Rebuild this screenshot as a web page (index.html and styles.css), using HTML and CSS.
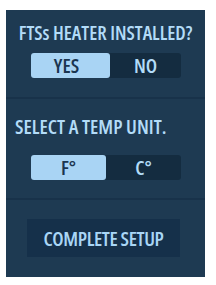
FILE: index.html
```html
<!DOCTYPE html>
<html lang="en">
<head>
    <meta charset="UTF-8">
    <meta name="viewport" content="width=device-width, initial-scale=1.0">
    <title>Setup</title>
    <link rel="stylesheet" href="styles.css">
</head>
<body>
    <div class="panel">
        <div class="section heater">
            <h2 class="title center">FTSs HEATER INSTALLED?</h2>
            <div class="toggle">
                <span class="opt active">YES</span>
                <span class="opt">NO</span>
            </div>
        </div>
        <div class="section unit">
            <h2 class="title">SELECT A TEMP UNIT.</h2>
            <div class="toggle">
                <span class="opt active">F°</span>
                <span class="opt">C°</span>
            </div>
        </div>
        <div class="section finish">
            <button class="complete">COMPLETE SETUP</button>
        </div>
    </div>
</body>
</html>
```

FILE: styles.css
```css
body {
    margin: 0;
    padding: 0;
    background-color: #fff;
    font-family: "Open Sans", "Roboto Condensed", sans-serif;
    font-stretch: 75%;
}
.panel {
    width: 199px;
    height: 267px;
    margin: 10px 0 0 6px;
    background-color: #1e3a52;
}
.section {
    border-bottom: 2px solid #18324a;
    box-sizing: border-box;
}
.heater {
    height: 89px;
    padding-top: 13px;
}
.unit {
    height: 101px;
    padding-top: 18px;
}
.finish {
    border-bottom: none;
    padding-top: 19px;
}
.title {
    margin: 0;
    padding-left: 9px;
    font-size: 19.5px;
    font-weight: 600;
    line-height: 20px;
    white-space: nowrap;
    color: #b3dcf8;
}
.unit .title {
    font-size: 20px;
}
.title.center {
    padding-left: 0;
    text-align: center;
}
.toggle {
    display: flex;
    width: 150px;
    height: 25px;
    margin: 10px 0 0 25px;
    background-color: #142c40;
    border-radius: 3px;
}
.unit .toggle {
    margin-top: 18px;
}
.opt {
    flex: 1;
    display: flex;
    align-items: center;
    justify-content: center;
    font-size: 20px;
    font-weight: 600;
    color: #b3dcf8;
}
.heater .opt.active {
    padding-right: 8px;
}
.opt.active {
    background-color: #a9d4f4;
    color: #1a3550;
    border-radius: 3px;
}
.complete {
    display: block;
    width: 153px;
    height: 38px;
    margin-left: 21px;
    padding: 0;
    border: none;
    background-color: #15304a;
    font-family: inherit;
    font-size: 20px;
    font-weight: 600;
    font-stretch: inherit;
    letter-spacing: -0.4px;
    white-space: nowrap;
    color: #a9d6f6;
}
```
